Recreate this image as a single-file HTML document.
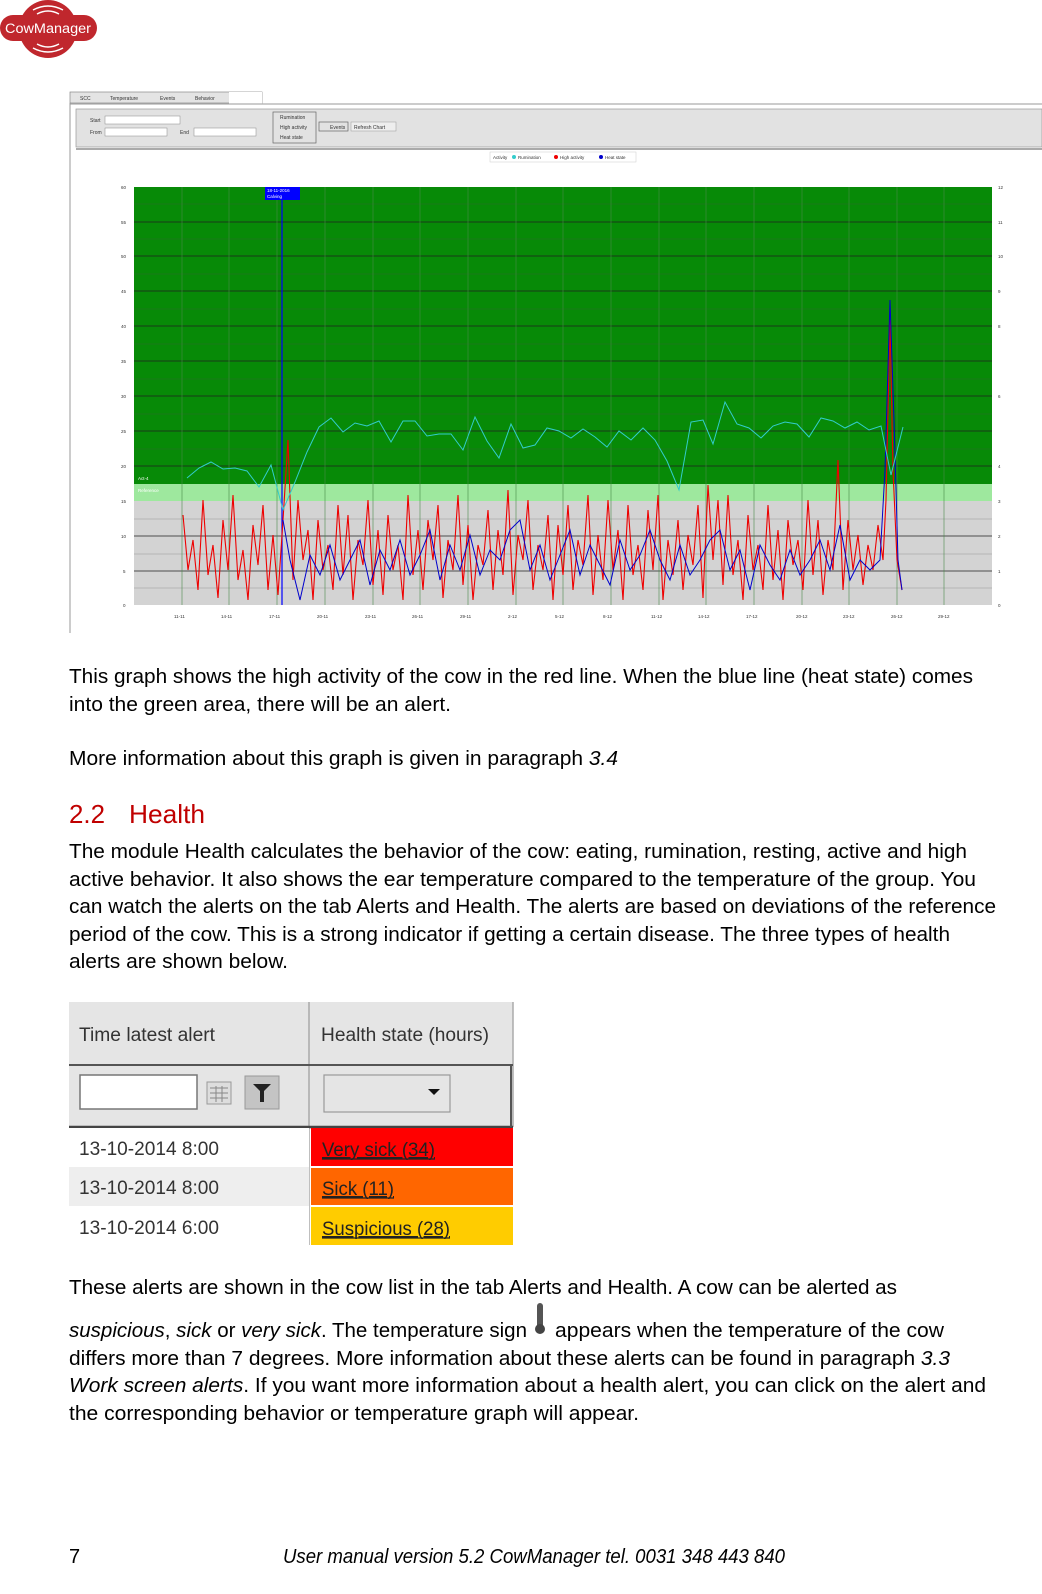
<!DOCTYPE html>
<html><head><meta charset="utf-8"><style>
body{margin:0;width:1042px;height:1594px;background:#fff;position:relative;overflow:hidden;font-family:"Liberation Sans",sans-serif}
.a{position:absolute}
</style></head><body>
<!-- logo -->
<svg class="a" style="left:0;top:0" width="100" height="60">
<circle cx="48" cy="29" r="29" fill="#c0272d"/>
<rect x="0" y="15" width="97" height="26" rx="13" fill="#c0272d"/>
<path d="M33 10 Q48 2 63 10 M37 14 Q48 8 59 14 M33 48 Q48 56 63 48 M37 44 Q48 50 59 44" stroke="#fff" stroke-width="1.5" fill="none"/>
<text x="48" y="33" fill="#fff" font-size="13.5" text-anchor="middle" textLength="86" lengthAdjust="spacingAndGlyphs">CowManager</text>
</svg>
<!-- screenshot -->
<svg class="a" style="left:0;top:0" width="1042" height="640" font-family="Liberation Sans">
<rect x="70" y="92" width="192" height="11" fill="#e4e4e4" stroke="#888" stroke-width=".7"/>
<g font-size="5" fill="#333"><text x="80" y="100">SCC</text><text x="110" y="100">Temperature</text><text x="160" y="100">Events</text><text x="195" y="100">Behavior</text><text x="235" y="100">Activity</text></g>
<rect x="229" y="92" width="33" height="12" fill="#fff"/>
<line x1="70" y1="103" x2="70" y2="633" stroke="#999"/>
<line x1="70" y1="104" x2="1042" y2="104" stroke="#999"/>
<rect x="76" y="109" width="966" height="38" fill="#e2e2e2" stroke="#999" stroke-width=".7"/>
<line x1="76" y1="149" x2="1042" y2="149" stroke="#555"/>
<rect x="105" y="116" width="75" height="8" fill="#fff" stroke="#888" stroke-width=".5"/>
<rect x="105" y="128" width="62" height="8" fill="#fff" stroke="#888" stroke-width=".5"/>
<rect x="194" y="128" width="62" height="8" fill="#fff" stroke="#888" stroke-width=".5"/>
<rect x="273" y="112" width="43" height="31" fill="none" stroke="#666" stroke-width=".7"/>
<rect x="319" y="122" width="29" height="9" fill="none" stroke="#666" stroke-width=".7"/>
<rect x="351" y="122" width="45" height="9" fill="#eee" stroke="#999" stroke-width=".5"/>
<g font-size="5" fill="#333"><text x="90" y="122">Start</text><text x="90" y="134">From</text><text x="180" y="134">End</text><text x="280" y="119">Rumination</text><text x="280" y="129">High activity</text><text x="280" y="139">Heat state</text><text x="330" y="129">Events</text><text x="354" y="129">Refresh Chart</text></g>
<rect x="490" y="152" width="146" height="10" fill="#fff" stroke="#ccc" stroke-width=".5"/>
<g font-size="4.5" fill="#333"><text x="493" y="159">Activity</text><circle cx="514" cy="157" r="2" fill="#3cc"/><text x="518" y="159">Rumination</text><circle cx="556" cy="157" r="2" fill="#e00"/><text x="560" y="159">High activity</text><circle cx="601" cy="157" r="2" fill="#00c"/><text x="605" y="159">Heat state</text></g>
<rect x="134" y="187" width="858" height="297" fill="#078a07"/>
<rect x="134" y="484" width="858" height="17" fill="#9ee89e"/>
<rect x="134" y="501" width="858" height="104" fill="#d3d3d3"/>
<g stroke="#2a6a2a" stroke-width=".5"><path d="M134 204H992M134 239H992M134 274H992M134 309H992M134 344H992M134 379H992M134 414H992M134 449H992"/></g>
<g stroke="#222" stroke-width=".8"><path d="M134 222H992M134 256H992M134 291H992M134 326H992M134 361H992M134 396H992M134 431H992M134 466H992M134 536H992M134 571H992"/></g>
<g stroke="#999" stroke-width=".5"><path d="M134 519H992M134 554H992M134 588H992"/></g>
<g stroke="#4a8a4a" stroke-width=".6"><path d="M182 187V605M229 187V605M277 187V605M325 187V605M373 187V605M420 187V605M468 187V605M516 187V605M563 187V605M611 187V605M659 187V605M706 187V605M754 187V605M802 187V605M849 187V605M897 187V605M944 187V605"/></g>
<line x1="282" y1="187" x2="282" y2="605" stroke="#00f" stroke-width="1.2"/>
<rect x="265" y="187" width="35" height="13" fill="#00f"/>
<text x="267" y="192" font-size="4.5" fill="#fff">18-11-2016</text><text x="267" y="198" font-size="4.5" fill="#fff">Calving</text>
<text x="138" y="480" font-size="4.5" fill="#fff">Act-4</text><text x="138" y="492" font-size="4.5" fill="#fff">Reference</text>
<polyline fill="none" stroke="#e00" stroke-width="1.1" points="183,515 188,570 193,540 198,590 203,500 208,575 213,545 218,598 223,520 228,570 233,495 238,580 243,550 248,600 253,525 258,565 263,505 268,590 273,535 278,595 283,520 288,440 293,580 298,500 303,560 308,530 313,600 318,520 323,570 328,545 333,590 338,505 343,575 348,515 353,600 358,540 363,565 368,500 373,585 378,530 383,595 388,515 393,570 398,545 403,600 408,495 413,575 418,530 423,590 428,520 433,560 438,505 443,598 448,540 453,570 458,495 463,585 468,525 473,600 478,545 483,565 488,510 493,590 498,530 503,575 508,490 513,595 518,535 523,560 528,500 533,590 538,545 543,570 548,515 553,600 558,525 563,575 568,505 573,590 578,540 583,565 588,495 593,595 598,535 603,580 608,500 613,570 618,530 623,600 628,505 633,575 638,545 643,590 648,510 653,570 658,495 663,600 668,540 673,575 678,520 683,590 688,535 693,565 698,505 703,598 708,485 713,560 718,500 723,585 728,495 733,575 738,540 743,600 748,515 753,570 758,545 763,590 768,505 773,580 778,530 783,600 788,520 793,565 798,540 803,590 808,500 813,575 818,520 823,595 828,540 833,570 838,460 843,590 848,520 853,570 858,535 863,585 868,545 873,570 878,525 883,560 886,500 890,320 893,470 897,560 902,590"/>
<polyline fill="none" stroke="#00c" stroke-width="1" points="283,520 290,560 300,600 310,555 320,575 330,545 340,580 350,560 360,540 370,585 380,550 390,570 400,540 410,575 420,555 430,530 440,580 450,545 460,570 470,535 480,575 490,550 500,560 510,530 520,520 530,570 540,545 550,580 560,555 570,530 580,575 590,545 600,565 610,585 620,540 630,570 640,555 650,530 660,560 670,580 680,545 690,575 700,560 710,540 720,530 730,570 740,550 750,590 760,545 770,565 780,580 790,550 800,575 810,560 820,540 830,570 840,525 850,580 860,560 870,570 880,560 885,470 890,300 894,420 898,560 902,590"/>
<polyline fill="none" stroke="#3cc" stroke-width="1" points="187,478 199,468 211,462 223,469 235,468 247,471 259,487 271,465 283,510 295,482 307,452 319,427 331,418 343,432 355,423 367,426 379,421 391,442 403,421 415,421 427,436 439,434 451,434 463,450 475,417 487,441 499,458 511,424 523,448 535,445 547,428 559,431 571,438 583,429 595,437 607,447 619,431 631,440 643,428 655,440 667,461 679,490 691,422 703,420 713,444 725,402 737,424 749,428 761,438 773,426 785,422 797,424 809,437 821,418 833,421 845,428 857,422 869,430 881,426 891,475 903,427"/>
<g font-size="4.5" fill="#333"><text x="121" y="189">60</text><text x="121" y="224">55</text><text x="121" y="258">50</text><text x="121" y="293">45</text><text x="121" y="328">40</text><text x="121" y="363">35</text><text x="121" y="398">30</text><text x="121" y="433">25</text><text x="121" y="468">20</text><text x="121" y="503">15</text><text x="121" y="538">10</text><text x="123" y="573">5</text><text x="123" y="607">0</text>
<text x="174" y="618">11-11</text><text x="221" y="618">14-11</text><text x="269" y="618">17-11</text><text x="317" y="618">20-11</text><text x="365" y="618">23-11</text><text x="412" y="618">26-11</text><text x="460" y="618">29-11</text><text x="508" y="618">2-12</text><text x="555" y="618">5-12</text><text x="603" y="618">8-12</text><text x="651" y="618">11-12</text><text x="698" y="618">14-12</text><text x="746" y="618">17-12</text><text x="796" y="618">20-12</text><text x="843" y="618">23-12</text><text x="891" y="618">26-12</text><text x="938" y="618">29-12</text>
<text x="998" y="189">12</text><text x="998" y="224">11</text><text x="998" y="258">10</text><text x="998" y="293">9</text><text x="998" y="328">8</text><text x="998" y="398">6</text><text x="998" y="468">4</text><text x="998" y="503">3</text><text x="998" y="538">2</text><text x="998" y="573">1</text><text x="998" y="607">0</text></g>
</svg>
<!-- text -->
<svg class="a" style="left:0;top:0" width="1042" height="1594" font-family="Liberation Sans" font-size="20" fill="#000">
<text x="69" y="683" textLength="904" lengthAdjust="spacingAndGlyphs">This graph shows the high activity of the cow in the red line. When the blue line (heat state) comes</text>
<text x="69" y="711" textLength="382" lengthAdjust="spacingAndGlyphs">into the green area, there will be an alert.</text>
<text x="69" y="765" textLength="549" lengthAdjust="spacingAndGlyphs">More information about this graph is given in paragraph <tspan font-style="italic">3.4</tspan></text>
<text x="69" y="823" font-size="26" fill="#c00000" textLength="36" lengthAdjust="spacingAndGlyphs">2.2</text>
<text x="129" y="823" font-size="26" fill="#c00000" textLength="76" lengthAdjust="spacingAndGlyphs">Health</text>
<text x="69" y="858" textLength="898" lengthAdjust="spacingAndGlyphs">The module Health calculates the behavior of the cow: eating, rumination, resting, active and high</text>
<text x="69" y="886" textLength="907" lengthAdjust="spacingAndGlyphs">active behavior. It also shows the ear temperature compared to the temperature of the group. You</text>
<text x="69" y="913" textLength="927" lengthAdjust="spacingAndGlyphs">can watch the alerts on the tab Alerts and Health. The alerts are based on deviations of the reference</text>
<text x="69" y="941" textLength="881" lengthAdjust="spacingAndGlyphs">period of the cow. This is a strong indicator if getting a certain disease. The three types of health</text>
<text x="69" y="968" textLength="219" lengthAdjust="spacingAndGlyphs">alerts are shown below.</text>
<text x="69" y="1294" textLength="828" lengthAdjust="spacingAndGlyphs">These alerts are shown in the cow list in the tab Alerts and Health. A cow can be alerted as</text>
<text x="69" y="1337" textLength="458" lengthAdjust="spacingAndGlyphs"><tspan font-style="italic">suspicious</tspan>, <tspan font-style="italic">sick</tspan> or <tspan font-style="italic">very sick</tspan>.  The temperature sign</text>
<rect x="537" y="1303" width="6" height="25" rx="3" fill="#555"/><circle cx="540" cy="1329" r="5" fill="#444"/>
<text x="555" y="1337" textLength="389" lengthAdjust="spacingAndGlyphs">appears when the temperature of the cow</text>
<text x="69" y="1365" textLength="881" lengthAdjust="spacingAndGlyphs">differs more than 7 degrees. More information about these alerts can be found in paragraph <tspan font-style="italic">3.3</tspan></text>
<text x="69" y="1392" textLength="917" lengthAdjust="spacingAndGlyphs"><tspan font-style="italic">Work screen alerts</tspan>. If you want more information about a health alert, you can click on the alert and</text>
<text x="69" y="1420" textLength="570" lengthAdjust="spacingAndGlyphs">the corresponding behavior or temperature graph will appear.</text>
<text x="69" y="1563">7</text>
<text x="283" y="1563" font-style="italic" textLength="502" lengthAdjust="spacingAndGlyphs">User manual version 5.2 CowManager tel. 0031 348 443 840</text>
</svg>
<!-- table -->
<svg class="a" style="left:69px;top:1002px" width="446" height="245" font-family="Liberation Sans" font-size="19">
<rect x="0" y="0" width="444" height="125" fill="#e5e5e5"/>
<line x1="240" y1="0" x2="240" y2="243" stroke="#aaa" stroke-width="1.5"/>
<line x1="444" y1="0" x2="444" y2="125" stroke="#aaa" stroke-width="1.5"/>
<line x1="0" y1="63" x2="444" y2="63" stroke="#555" stroke-width="2"/>
<line x1="0" y1="125" x2="444" y2="125" stroke="#444" stroke-width="2.5"/>
<line x1="442" y1="63" x2="442" y2="125" stroke="#555" stroke-width="2"/>
<text x="10" y="39" fill="#333" textLength="136" lengthAdjust="spacingAndGlyphs">Time latest alert</text>
<text x="252" y="39" fill="#333" textLength="168" lengthAdjust="spacingAndGlyphs">Health state (hours)</text>
<rect x="11" y="73" width="117" height="34" fill="#fff" stroke="#777" stroke-width="1.5"/>
<rect x="138" y="80" width="24" height="22" fill="#ddd" stroke="#999"/>
<path d="M141 86H159M141 91H159M141 96H159M147 84V100M153 84V100" stroke="#888"/>
<rect x="176" y="74" width="34" height="33" fill="#c4c4c4" stroke="#999"/>
<path d="M184 82H202L195 89V100H191V89Z" fill="#222"/>
<rect x="255" y="73" width="126" height="37" fill="#e5e5e5" stroke="#999" stroke-width="1.2"/>
<path d="M359 87H371L365 93Z" fill="#111"/>
<rect x="0" y="126" width="240" height="39" fill="#fff"/>
<rect x="0" y="165" width="240" height="39" fill="#eee"/>
<rect x="0" y="204" width="240" height="39" fill="#fff"/>
<rect x="242" y="126" width="202" height="38" fill="#ff0000"/>
<rect x="242" y="166" width="202" height="37" fill="#ff6600"/>
<rect x="242" y="205" width="202" height="38" fill="#ffcc00"/>
<g fill="#333"><text x="10" y="153" textLength="140" lengthAdjust="spacingAndGlyphs">13-10-2014 8:00</text><text x="10" y="192" textLength="140" lengthAdjust="spacingAndGlyphs">13-10-2014 8:00</text><text x="10" y="232" textLength="140" lengthAdjust="spacingAndGlyphs">13-10-2014 6:00</text></g>
<g fill="#222" text-decoration="underline"><text x="253" y="154" textLength="113" lengthAdjust="spacingAndGlyphs">Very sick (34)</text><text x="253" y="193" textLength="72" lengthAdjust="spacingAndGlyphs">Sick (11)</text><text x="253" y="233" textLength="128" lengthAdjust="spacingAndGlyphs">Suspicious (28)</text></g>
<path d="M253 157H366M253 196H325M253 236H381" stroke="#222" stroke-width="1.3"/>
</svg>
</body></html>
